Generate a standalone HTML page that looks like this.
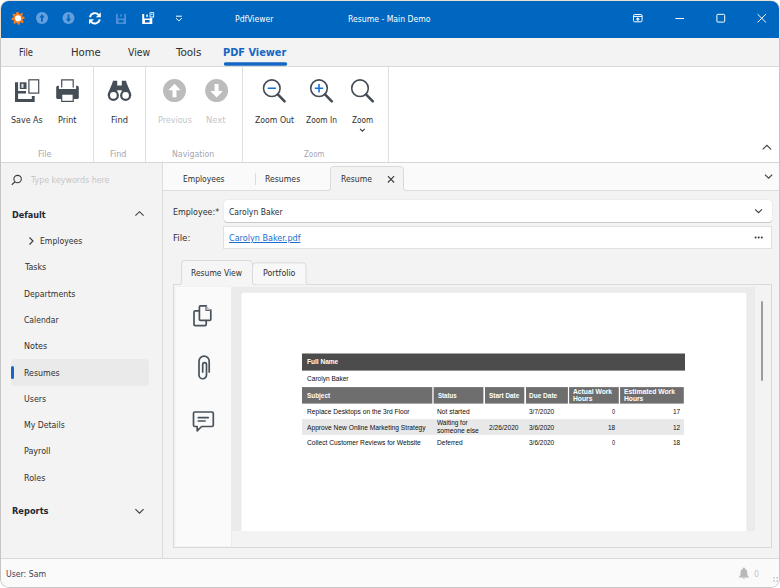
<!DOCTYPE html>
<html lang="en">
<head>
<meta charset="utf-8">
<title>Resume - Main Demo</title>
<style>
html,body{margin:0;padding:0;}
body{width:780px;height:588px;overflow:hidden;background:#ffffff;font-family:"Liberation Sans",sans-serif;}
#frame{position:absolute;left:0;top:0;width:780px;height:588px;border-radius:9px;background:linear-gradient(to bottom,#eadfd4 0,#eadfd4 38px,#c6c6c6 38px,#c6c6c6 100%);}
#win{position:absolute;left:1px;top:1px;width:778px;height:586px;box-sizing:border-box;border-radius:8px;overflow:hidden;background:#f3f3f3;}
#win *{box-sizing:border-box;}
.abs{position:absolute;}
#win > div, #win > svg{position:absolute;}
/* all coordinates below are page coords minus 1 (window offset) via #stage */
#stage{left:-1px;top:-1px;width:780px;height:588px;}
#stage div, #stage svg{position:absolute;}
#texts{left:-1px;top:-1px;width:780px;height:588px;pointer-events:none;}
.t{position:absolute;white-space:pre;transform-origin:0 0;display:block;font-family:"DejaVu Sans Condensed","DejaVu Sans","Liberation Sans",sans-serif;font-stretch:condensed;}
.t.p{font-family:"Liberation Sans",sans-serif;font-stretch:normal;}
#titlebar{left:0;top:0;width:780px;height:38px;background:#0067c0;}
#tabbar{left:0;top:38px;width:780px;height:29px;background:#f3f3f3;border-bottom:1px solid #dadada;}
#ribbon{left:0;top:67px;width:780px;height:96px;background:#ffffff;border-bottom:1px solid #d6d6d6;}
.rsep{top:67px;width:1px;height:95px;background:#e1e1e1;}
#sidebar{left:0;top:163px;width:163px;height:395px;background:#f3f3f3;border-right:1px solid #dcdcdc;}
#dochead{left:163px;top:163px;width:617px;height:28px;background:#fafafa;border-bottom:1px solid #dddddd;}
#status{left:0;top:558px;width:780px;height:30px;background:#fafafa;border-top:1px solid #d9d9d9;}
.inp{background:#fff;}

</style>
</head>
<body>
<div id="frame"></div>
<div id="win">
<div id="stage">
  <div id="titlebar"></div>
  <div id="tabbar"></div>
  <div id="ribbon"></div>
  <div class="rsep" style="left:93px"></div>
  <div class="rsep" style="left:145px"></div>
  <div class="rsep" style="left:242px"></div>
  <div class="rsep" style="left:388px"></div>

  <div id="sidebar"></div>
  <div id="dochead"></div>
  <div id="status"></div>

  <!-- sidebar selection -->
  <div style="left:11px;top:359px;width:138px;height:26.5px;background:#eaeaea;border-radius:4px"></div>
  <div style="left:11px;top:366px;width:3px;height:12.6px;background:#1467c4;border-radius:1.5px"></div>

  <!-- doc tabs -->
  <div style="left:255px;top:172.5px;width:1px;height:12.5px;background:#dcdcdc"></div>
  <svg style="left:320px;top:160px" width="100" height="34" viewBox="320 160 100 34">
    <path d="M326 190.5 H328 Q330.5 190.5 330.5 188 V169.700 Q330.5 166.5 333.700 166.5 H400.3 Q403.5 166.5 403.5 169.700 V188 Q403.5 190.5 406 190.5 H408 V192 H326 Z" fill="#f3f3f3" stroke="none"/>
    <path d="M326 190.5 H328 Q330.5 190.5 330.5 188 V169.700 Q330.5 166.5 333.700 166.5 H400.3 Q403.5 166.5 403.5 169.700 V188 Q403.5 190.5 406 190.5 H408" fill="none" stroke="#dadada" stroke-width="1"/>
    <path d="M387.900 176.100 L394.100 182.500 M394.100 176.100 L387.900 182.500" stroke="#3c3c3c" stroke-width="1.100" fill="none"/>
  </svg>

  <!-- inputs -->
  <div class="inp" style="left:223.5px;top:200px;width:548.5px;height:22px;border-radius:3.5px;box-shadow:0 1px 0 0 #c9c9c9, 0 0 0 0.5px #e6e6e6"></div>
  <div class="inp" style="left:223px;top:226.3px;width:549px;height:22.3px;border:1px solid #e0e0e0"></div>

  <!-- inner tab panel -->
  <div style="left:173px;top:284px;width:599px;height:264px;border:1px solid #d9d9d9;background:#f3f3f3"></div>
  <div style="left:176px;top:287px;width:56px;height:259px;background:#fafafa;border-right:1px solid #ececec"></div>
  <div style="left:232px;top:287px;width:523px;height:244px;background:#ebebeb"></div>
  <svg style="left:240px;top:290px" width="510" height="241" viewBox="240 290 510 241"><path d="M241.500 531 V294.200 Q241.500 292.700 243 292.700 H744.800 Q746.300 292.700 746.300 294.200 V531 Z" fill="#ffffff"/></svg>
  <div style="left:761px;top:300.5px;width:2.2px;height:80px;background:#9c9c9c;border-radius:1px"></div>
  <svg style="left:170px;top:255px" width="145" height="32" viewBox="170 255 145 32">
    <path d="M252.5 284.5 V266.200 Q252.5 262.900 255.800 262.900 H302.700 Q306 262.900 306 266.200 V282 Q306 284.5 308.5 284.5 H310" fill="#f8f8f8" stroke="#dadada" stroke-width="1"/>
    <path d="M177 284.5 H179 Q181.5 284.5 181.5 282 V263.800 Q181.5 260.500 184.800 260.500 H249.200 Q252.5 260.500 252.5 263.800 V282 Q252.5 284.5 255 284.5 H256 V286 H177 Z" fill="#f5f5f5" stroke="none"/>
    <path d="M177 284.5 H179 Q181.5 284.5 181.5 282 V263.800 Q181.5 260.500 184.800 260.500 H249.200 Q252.5 260.500 252.5 263.800 V282 Q252.5 284.5 255 284.5 H256" fill="none" stroke="#dadada" stroke-width="1"/>
  </svg>

  <!-- pdf table -->
  <svg style="left:300px;top:350px" width="390" height="90" viewBox="300 350 390 90">
    <rect x="302" y="353.500" width="383" height="17.100" fill="#4c4c4c"/>
    <g fill="#6e6e6e">
      <rect x="302" y="387.100" width="130.300" height="16.500"/>
      <rect x="433.600" y="387.100" width="49.800" height="16.500"/>
      <rect x="485" y="387.100" width="39.300" height="16.500"/>
      <rect x="526" y="387.100" width="41.900" height="16.500"/>
      <rect x="569.100" y="387.100" width="49.700" height="16.500"/>
      <rect x="620.100" y="387.100" width="63.700" height="16.500"/>
    </g>
    <rect x="302" y="419.100" width="382" height="15.800" fill="#e8e8e8"/>
  </svg>
<svg id="icons" style="left:0;top:0" width="780" height="588" viewBox="0 0 780 588" fill="none">
  <!-- title bar: app gear/sun -->
  <g transform="translate(18.1 18.3) scale(0.88) rotate(-8)">
    <path fill="#f57c1f" d="M-1.3 -7.2 L1.3 -7.2 L1.9 -5 L3.2 -4.5 L5.1 -5.9 L6.3 -4.2 L4.9 -2.4 L5.4 -1.1 L7.4 -0.6 L7.2 1.6 L5.2 1.7 L4.6 3 L5.9 4.9 L4.3 6.2 L2.6 4.9 L1.2 5.4 L0.8 7.4 L-1.4 7.3 L-1.7 5.2 L-3 4.7 L-4.8 6 L-6.2 4.4 L-4.9 2.6 L-5.4 1.3 L-7.4 0.9 L-7.3 -1.3 L-5.2 -1.7 L-4.6 -3 L-5.9 -4.8 L-4.3 -6.2 L-2.5 -4.9 L-1.6 -5.2 Z"/>
    <circle r="3.5" fill="#ffffff"/>
  </g>
  <!-- up / down (dim) -->
  <g fill="#659fdd">
    <circle cx="42" cy="18.1" r="6"/>
    <circle cx="68.5" cy="18.1" r="6"/>
  </g>
  <path fill="#0067c0" d="M42 14.3 L44.700 17.500 H42.900 V21.700 H41.100 V17.500 H39.300 Z"/>
  <path fill="#0067c0" d="M68.5 21.900 L71.200 18.700 H69.400 V14.500 H67.600 V18.700 H65.800 Z"/>
  <!-- refresh -->
  <g stroke="#ffffff" stroke-width="1.9" fill="none">
    <path d="M90 17.2 A5 5 0 0 1 98.8 15"/>
    <path d="M99.8 19.4 A5 5 0 0 1 91 21.6"/>
  </g>
  <path fill="#ffffff" d="M100.8 12.3 V17.3 H95.8 Z"/>
  <path fill="#ffffff" d="M89 24.3 V19.3 H94 Z"/>
  <!-- save (dim) -->
  <g fill="#4b8fd8">
    <path d="M116 13.8 H117.8 V18.5 H124.2 V13.8 H126 V23.9 H116 Z M118.6 20 V22.6 H123.4 V20 Z"/>
    <rect x="120.2" y="14.4" width="1.6" height="2.2"/>
  </g>
  <!-- save as (white) -->
  <g fill="#ffffff">
    <path d="M142.2 14 H144.2 V18.4 H150.3 V17.9 H152.3 V23.9 H142.2 Z M145 19.9 V22.5 H149.6 V19.9 Z"/>
    <rect x="146.3" y="14.5" width="1.5" height="2.3"/>
    <path d="M149.6 12.2 H154.1 V17.4 H149.6 Z M150.5 13.1 V16.5 H153.2 V13.1 Z" fill-rule="evenodd"/>
    <rect x="151.3" y="13.6" width="1.1" height="1.5"/>
  </g>
  <!-- qat dropdown -->
  <g stroke="#ffffff" stroke-width="1" fill="none">
    <path d="M176 16.2 H181.8"/>
    <path d="M176 18.2 L178.9 20.9 L181.8 18.2"/>
  </g>
  <!-- window buttons -->
  <g stroke="#ffffff" stroke-width="1" fill="none">
    <rect x="633.5" y="14.5" width="8.6" height="7.3" rx="1.2"/>
    <path d="M633.5 16.4 H642.1"/>
    <path d="M675.4 18.5 H684"/>
    <rect x="716.9" y="14.3" width="7.8" height="7.8" rx="1"/>
    <path d="M757.6 14.2 L765.9 22.4 M765.9 14.2 L757.6 22.4"/>
  </g>
  <path fill="#ffffff" d="M637.8 17.3 L640 19.5 H638.5 V20.8 H637.1 V19.5 H635.6 Z"/>

  <!-- active ribbon tab underline -->
  <rect x="223.800" y="62.300" width="63.400" height="3.400" rx="1.700" fill="#1467c4"/>
  <!-- ribbon: save as -->
  <g fill="#454d57">
    <path d="M15 82.3 H18.1 V91 H26 V93.6 H18.1 V98.9 H31.800 V96.1 H34.7 V102 H15 Z"/>
    <rect x="19.8" y="82.3" width="6.7" height="6.7"/>
  </g>
  <rect x="21.4" y="83.800" width="2.1" height="4" fill="#e3e5e8"/>
  <rect x="28.9" y="79.800" width="9.800" height="13.3" stroke="#454d57" stroke-width="1.2" fill="#ffffff"/>
  <!-- ribbon: print -->
  <path d="M61.7 87.5 V79.800 H73.2 V87.5" stroke="#454d57" stroke-width="1.2" fill="#ffffff"/>
  <path d="M56.2 87.4 Q56.2 85.800 57.800 85.800 H58.900 V88.900 H76.100 V85.800 H77.200 Q78.800 85.800 78.800 87.4 V97.4 Q78.800 98.900 77.300 98.900 H57.700 Q56.2 98.900 56.2 97.4 Z" fill="#454d57"/>
  <rect x="61.7" y="94.1" width="11.5" height="7.3" stroke="#454d57" stroke-width="1.2" fill="#ffffff"/>
  <!-- ribbon: find (binoculars) -->
  <g fill="#454d57">
    <path d="M113 80.8 H117.2 V85.6 H121.8 V80.8 H126 L126.800 83.4 L131.2 93.8 V96 H121.800 V90.2 H117.2 V96 H107.800 V93.800 L112.2 83.4 Z"/>
    <circle cx="113.4" cy="95.4" r="5.5"/>
    <circle cx="125.6" cy="95.4" r="5.5"/>
  </g>
  <circle cx="113.4" cy="95.4" r="3.3" fill="#ffffff"/>
  <circle cx="125.6" cy="95.4" r="3.3" fill="#ffffff"/>
  <!-- ribbon: previous / next (disabled) -->
  <circle cx="174.5" cy="90.6" r="11.5" fill="#bcbcbc"/>
  <circle cx="216.6" cy="90.6" r="11.5" fill="#bcbcbc"/>
  <path fill="#ffffff" d="M174.5 83.800 L180.7 90.3 H176.5 V97.2 H172.5 V90.3 H168.3 Z"/>
  <path fill="#ffffff" d="M216.6 97.4 L222.800 90.900 H218.6 V84 H214.6 V90.900 H210.4 Z"/>
  <!-- ribbon: zoom out / in / zoom -->
  <g stroke="#444c56" fill="none">
    <circle cx="271.8" cy="88.2" r="8.3" stroke-width="1.6"/>
    <path d="M277.8 94.4 L284.6 101.4" stroke-width="2.6" stroke-linecap="round"/>
    <circle cx="319" cy="88.2" r="8.3" stroke-width="1.6"/>
    <path d="M325 94.4 L331.8 101.4" stroke-width="2.6" stroke-linecap="round"/>
    <circle cx="360" cy="88.2" r="8.3" stroke-width="1.6"/>
    <path d="M366 94.4 L372.8 101.4" stroke-width="2.6" stroke-linecap="round"/>
  </g>
  <g stroke="#1370dc" stroke-width="1.6" fill="none">
    <path d="M267.700 88.2 H276"/>
    <path d="M314.8 88.2 H323.2 M319 84 V92.4"/>
  </g>
  <path d="M360 128.900 L362.400 131.200 L364.800 128.900" stroke="#404040" stroke-width="1.150" fill="none"/>
  <!-- ribbon collapse chevron -->
  <path d="M762.700 149.300 L766.900 145.300 L771.100 149.300" stroke="#404040" stroke-width="1.150" fill="none"/>
  <!-- doc tab dropdown chevron -->
  <path d="M765 174.700 L768.600 178.200 L772.200 174.700" stroke="#404040" stroke-width="1.150" fill="none"/>

  <!-- sidebar search icon -->
  <circle cx="17.600" cy="179.100" r="3.700" stroke="#3c3c3c" stroke-width="1.1"/>
  <path d="M14.900 181.900 L11.800 184.800" stroke="#3c3c3c" stroke-width="1.2"/>
  <!-- sidebar chevrons -->
  <path d="M135.400 215.700 L139.500 211.700 L143.600 215.700" stroke="#404040" stroke-width="1.150" fill="none"/>
  <path d="M29.500 237.500 L33 241 L29.500 244.500" stroke="#404040" stroke-width="1.150" fill="none"/>
  <path d="M135.400 509.200 L139.500 513.200 L143.600 509.200" stroke="#404040" stroke-width="1.150" fill="none"/>

  <!-- combo / ellipsis -->
  <path d="M755.100 209.300 L758.500 212.600 L761.900 209.300" stroke="#404040" stroke-width="1.150" fill="none"/>
  <g fill="#333"><circle cx="755.600" cy="237.400" r="1"/><circle cx="758.700" cy="237.400" r="1"/><circle cx="761.800" cy="237.400" r="1"/></g>

  <!-- pdf nav icons -->
  <g stroke="#48525b" stroke-width="1.700" fill="none" stroke-linejoin="round" stroke-linecap="round">
    <path d="M199.400 310.900 H195.100 Q194 310.900 194 312 V324.500 Q194 325.600 195.100 325.600 H205.100 Q206.200 325.600 206.200 324.500 V320.500"/>
    <path d="M200.500 305.800 H206.300 V310.200 H210.800 V319.300 Q210.800 320.400 209.700 320.400 H200.500 Q199.400 320.400 199.400 319.300 V306.900 Q199.400 305.800 200.500 305.800 Z" fill="#fafafa"/>
    <path d="M209.200 372 V361.300 A5.100 5.100 0 0 0 199 361.300 V375 A3.750 3.750 0 0 0 206.500 375 V364.600 A1.900 1.900 0 0 0 202.700 364.600 V372"/>
    <path d="M194.800 412 H212 Q213.300 412 213.300 413.300 V425.200 Q213.300 426.500 212 426.500 H201.600 L197.200 430.800 V426.500 H194.800 Q193.500 426.500 193.500 425.200 V413.300 Q193.500 412 194.800 412 Z"/>
    <path d="M198.300 417.700 H208.200 M198.300 421 H205.100"/>
  </g>
  <path d="M206.300 305.800 L210.800 310.200 H206.300 Z" fill="#b9bec3"/>

  <!-- status: bell + grip -->
  <path fill="#b9b9b9" d="M743.900 567.600 Q745 567.600 745 568.700 Q747.300 569.500 747.300 572.300 V575 L748.700 576.800 V577.500 H739.100 V576.800 L740.500 575 V572.300 Q740.500 569.500 742.800 568.700 Q742.800 567.600 743.900 567.600 Z M742.900 578.100 H744.900 Q744.900 579.100 743.900 579.100 Q742.900 579.100 742.900 578.100 Z"/>
  <g fill="#a4a4a4">
    <rect x="773.400" y="577.200" width="1.200" height="1.200"/><rect x="776.600" y="577.200" width="1.200" height="1.200"/>
    <rect x="773.400" y="580.400" width="1.200" height="1.200"/><rect x="776.600" y="580.400" width="1.200" height="1.200"/>
  </g>
</svg>

</div>

<div id="texts">
<span class="t" style="left:235.00px;top:13.69px;font-size:9px;line-height:10.8px;color:#ffffff;transform:scale(0.9501,1.000);">PdfViewer</span>
<span class="t" style="left:347.70px;top:13.69px;font-size:9px;line-height:10.8px;color:#ffffff;transform:scale(0.9549,1.000);">Resume - Main Demo</span>
<span class="t" style="left:18.90px;top:46.09px;font-size:11px;line-height:13.2px;color:#2f2f2f;transform:scale(0.8479,1.000);">File</span>
<span class="t" style="left:71.40px;top:46.09px;font-size:11px;line-height:13.2px;color:#2f2f2f;transform:scale(1.0193,1.000);">Home</span>
<span class="t" style="left:127.60px;top:46.09px;font-size:11px;line-height:13.2px;color:#2f2f2f;transform:scale(0.9458,1.000);">View</span>
<span class="t" style="left:176.45px;top:46.09px;font-size:11px;line-height:13.2px;color:#2f2f2f;transform:scale(1.0507,1.000);">Tools</span>
<span class="t" style="left:223.00px;top:46.09px;font-size:11px;line-height:13.2px;color:#1467c4;transform:scale(0.9891,1.000);font-weight:bold;">PDF Viewer</span>
<span class="t" style="left:10.60px;top:114.79px;font-size:9px;line-height:10.8px;color:#2f2f2f;transform:scale(0.9849,1.000);">Save As</span>
<span class="t" style="left:57.80px;top:114.79px;font-size:9px;line-height:10.8px;color:#2f2f2f;transform:scale(0.9873,1.000);">Print</span>
<span class="t" style="left:110.50px;top:114.79px;font-size:9px;line-height:10.8px;color:#2f2f2f;transform:scale(1.0253,1.000);">Find</span>
<span class="t" style="left:157.70px;top:114.79px;font-size:9px;line-height:10.8px;color:#c3c5cc;transform:scale(0.9893,1.000);">Previous</span>
<span class="t" style="left:206.00px;top:114.79px;font-size:9px;line-height:10.8px;color:#c3c5cc;transform:scale(1.0391,1.000);">Next</span>
<span class="t" style="left:254.80px;top:114.79px;font-size:9px;line-height:10.8px;color:#2f2f2f;transform:scale(0.9625,1.000);">Zoom Out</span>
<span class="t" style="left:305.60px;top:114.79px;font-size:9px;line-height:10.8px;color:#2f2f2f;transform:scale(0.9250,1.000);">Zoom In</span>
<span class="t" style="left:351.80px;top:114.79px;font-size:9px;line-height:10.8px;color:#2f2f2f;transform:scale(0.9040,1.000);">Zoom</span>
<span class="t" style="left:37.50px;top:148.79px;font-size:9px;line-height:10.8px;color:#a3a7b3;transform:scale(0.9997,1.000);">File</span>
<span class="t" style="left:110.00px;top:148.79px;font-size:9px;line-height:10.8px;color:#a3a7b3;transform:scale(0.9947,1.000);">Find</span>
<span class="t" style="left:171.60px;top:148.79px;font-size:9px;line-height:10.8px;color:#a3a7b3;transform:scale(0.9670,1.000);">Navigation</span>
<span class="t" style="left:304.00px;top:148.79px;font-size:9px;line-height:10.8px;color:#a3a7b3;transform:scale(0.8742,1.000);">Zoom</span>
<span class="t" style="left:31.48px;top:174.89px;font-size:9px;line-height:10.8px;color:#c6c6c6;transform:scale(0.9804,1.000);">Type keywords here</span>
<span class="t" style="left:11.50px;top:209.59px;font-size:9px;line-height:10.8px;color:#1f2733;transform:scale(1.0018,1.000);font-weight:bold;">Default</span>
<span class="t" style="left:39.80px;top:235.69px;font-size:9px;line-height:10.8px;color:#2f2f2f;transform:scale(0.9523,1.000);">Employees</span>
<span class="t" style="left:25.08px;top:261.79px;font-size:9px;line-height:10.8px;color:#2f2f2f;transform:scale(0.9810,1.000);">Tasks</span>
<span class="t" style="left:24.10px;top:288.69px;font-size:9px;line-height:10.8px;color:#2f2f2f;transform:scale(0.9642,1.000);">Departments</span>
<span class="t" style="left:24.10px;top:314.79px;font-size:9px;line-height:10.8px;color:#2f2f2f;transform:scale(0.9491,1.000);">Calendar</span>
<span class="t" style="left:24.10px;top:341.09px;font-size:9px;line-height:10.8px;color:#2f2f2f;transform:scale(0.9929,1.000);">Notes</span>
<span class="t" style="left:24.10px;top:367.59px;font-size:9px;line-height:10.8px;color:#2f2f2f;transform:scale(0.9718,1.000);">Resumes</span>
<span class="t" style="left:24.10px;top:393.69px;font-size:9px;line-height:10.8px;color:#2f2f2f;transform:scale(0.9752,1.000);">Users</span>
<span class="t" style="left:24.10px;top:420.39px;font-size:9px;line-height:10.8px;color:#2f2f2f;transform:scale(0.9597,1.000);">My Details</span>
<span class="t" style="left:24.10px;top:446.49px;font-size:9px;line-height:10.8px;color:#2f2f2f;transform:scale(0.9902,1.000);">Payroll</span>
<span class="t" style="left:24.10px;top:472.79px;font-size:9px;line-height:10.8px;color:#2f2f2f;transform:scale(0.9903,1.000);">Roles</span>
<span class="t" style="left:11.50px;top:505.69px;font-size:9px;line-height:10.8px;color:#1f2733;transform:scale(1.0207,1.000);font-weight:bold;">Reports</span>
<span class="t" style="left:6.10px;top:568.79px;font-size:9px;line-height:10.8px;color:#3a3f55;transform:scale(0.9616,1.000);">User: Sam</span>
<span class="t" style="left:754.00px;top:569.29px;font-size:9px;line-height:10.8px;color:#c3c5cc;transform:scale(0.9600,1.000);">0</span>
<span class="t" style="left:182.70px;top:174.09px;font-size:9px;line-height:10.8px;color:#2f2f2f;transform:scale(0.9364,1.000);">Employees</span>
<span class="t" style="left:265.00px;top:174.09px;font-size:9px;line-height:10.8px;color:#2f2f2f;transform:scale(0.9608,1.000);">Resumes</span>
<span class="t" style="left:340.70px;top:174.09px;font-size:9px;line-height:10.8px;color:#2f2f2f;transform:scale(0.9555,1.000);">Resume</span>
<span class="t" style="left:172.70px;top:206.59px;font-size:9px;line-height:10.8px;color:#2f2f2f;transform:scale(0.9843,1.000);">Employee:*</span>
<span class="t" style="left:229.00px;top:206.59px;font-size:9px;line-height:10.8px;color:#2f2f2f;transform:scale(0.9475,1.000);">Carolyn Baker</span>
<span class="t" style="left:172.70px;top:232.79px;font-size:9px;line-height:10.8px;color:#2f2f2f;transform:scale(1.0719,1.000);">File:</span>
<span class="t" style="left:229.00px;top:232.79px;font-size:9px;line-height:10.8px;color:#1a6fd0;transform:scale(1.0005,1.000);text-decoration:underline;">Carolyn Baker.pdf</span>
<span class="t" style="left:190.70px;top:268.39px;font-size:9px;line-height:10.8px;color:#2f2f2f;transform:scale(0.9401,1.000);">Resume View</span>
<span class="t" style="left:262.50px;top:268.39px;font-size:9px;line-height:10.8px;color:#2f2f2f;transform:scale(0.9756,1.000);">Portfolio</span>
<span class="t p" style="left:306.60px;top:358.25px;font-size:6.5px;line-height:7.8px;color:#ffffff;transform:scale(1.0049,1.000);font-weight:bold;">Full Name</span>
<span class="t p" style="left:306.60px;top:375.15px;font-size:6.5px;line-height:7.8px;color:#0c0c0c;transform:scale(1.0091,1.000);">Carolyn Baker</span>
<span class="t p" style="left:306.60px;top:392.15px;font-size:6.5px;line-height:7.8px;color:#ffffff;transform:scale(0.9830,1.000);font-weight:bold;">Subject</span>
<span class="t p" style="left:438.20px;top:392.15px;font-size:6.5px;line-height:7.8px;color:#ffffff;transform:scale(0.9383,1.000);font-weight:bold;">Status</span>
<span class="t p" style="left:489.30px;top:392.15px;font-size:6.5px;line-height:7.8px;color:#ffffff;transform:scale(0.9875,1.000);font-weight:bold;">Start Date</span>
<span class="t p" style="left:529.40px;top:392.15px;font-size:6.5px;line-height:7.8px;color:#ffffff;transform:scale(1.0014,1.000);font-weight:bold;">Due Date</span>
<span class="t p" style="left:572.50px;top:387.95px;font-size:6.5px;line-height:7.8px;color:#ffffff;transform:scale(1.0343,1.000);font-weight:bold;">Actual Work</span>
<span class="t p" style="left:572.50px;top:395.05px;font-size:6.5px;line-height:7.8px;color:#ffffff;transform:scale(1.0332,1.000);font-weight:bold;">Hours</span>
<span class="t p" style="left:623.90px;top:387.95px;font-size:6.5px;line-height:7.8px;color:#ffffff;transform:scale(1.0387,1.000);font-weight:bold;">Estimated Work</span>
<span class="t p" style="left:623.90px;top:395.05px;font-size:6.5px;line-height:7.8px;color:#ffffff;transform:scale(1.0279,1.000);font-weight:bold;">Hours</span>
<span class="t p" style="left:306.60px;top:408.05px;font-size:6.5px;line-height:7.8px;color:#0c0c0c;transform:scale(1.0210,1.000);">Replace Desktops on the 3rd Floor</span>
<span class="t p" style="left:437.00px;top:408.05px;font-size:6.5px;line-height:7.8px;color:#0c0c0c;transform:scale(1.0256,1.000);">Not started</span>
<span class="t p" style="left:529.40px;top:408.05px;font-size:6.5px;line-height:7.8px;color:#0c0c0c;transform:scale(0.9966,1.000);">3/7/2020</span>
<span class="t p" style="left:612.30px;top:408.05px;font-size:6.5px;line-height:7.8px;color:#0c0c0c;transform:scale(0.8500,1.000);">0</span>
<span class="t p" style="left:673.00px;top:408.05px;font-size:6.5px;line-height:7.8px;color:#0c0c0c;transform:scale(0.9980,1.000);">17</span>
<span class="t p" style="left:306.60px;top:424.05px;font-size:6.5px;line-height:7.8px;color:#0c0c0c;transform:scale(1.0229,1.000);">Approve New Online Marketing Strategy</span>
<span class="t p" style="left:437.00px;top:419.45px;font-size:6.5px;line-height:7.8px;color:#0c0c0c;transform:scale(0.9950,1.000);">Waiting for</span>
<span class="t p" style="left:437.00px;top:426.75px;font-size:6.5px;line-height:7.8px;color:#0c0c0c;transform:scale(1.0329,1.000);">someone else</span>
<span class="t p" style="left:488.50px;top:424.05px;font-size:6.5px;line-height:7.8px;color:#0c0c0c;transform:scale(1.0204,1.000);">2/26/2020</span>
<span class="t p" style="left:529.40px;top:424.05px;font-size:6.5px;line-height:7.8px;color:#0c0c0c;transform:scale(0.9966,1.000);">3/6/2020</span>
<span class="t p" style="left:608.30px;top:424.05px;font-size:6.5px;line-height:7.8px;color:#0c0c0c;transform:scale(0.9849,1.000);">18</span>
<span class="t p" style="left:673.00px;top:424.05px;font-size:6.5px;line-height:7.8px;color:#0c0c0c;transform:scale(0.9980,1.000);">12</span>
<span class="t p" style="left:306.60px;top:439.25px;font-size:6.5px;line-height:7.8px;color:#0c0c0c;transform:scale(1.0273,1.000);">Collect Customer Reviews for Website</span>
<span class="t p" style="left:437.00px;top:439.25px;font-size:6.5px;line-height:7.8px;color:#0c0c0c;transform:scale(1.0127,1.000);">Deferred</span>
<span class="t p" style="left:529.40px;top:439.25px;font-size:6.5px;line-height:7.8px;color:#0c0c0c;transform:scale(0.9966,1.000);">3/6/2020</span>
<span class="t p" style="left:612.30px;top:439.25px;font-size:6.5px;line-height:7.8px;color:#0c0c0c;transform:scale(0.8500,1.000);">0</span>
<span class="t p" style="left:673.00px;top:439.25px;font-size:6.5px;line-height:7.8px;color:#0c0c0c;transform:scale(0.9980,1.000);">18</span>
</div>
</div>
</body>
</html>
